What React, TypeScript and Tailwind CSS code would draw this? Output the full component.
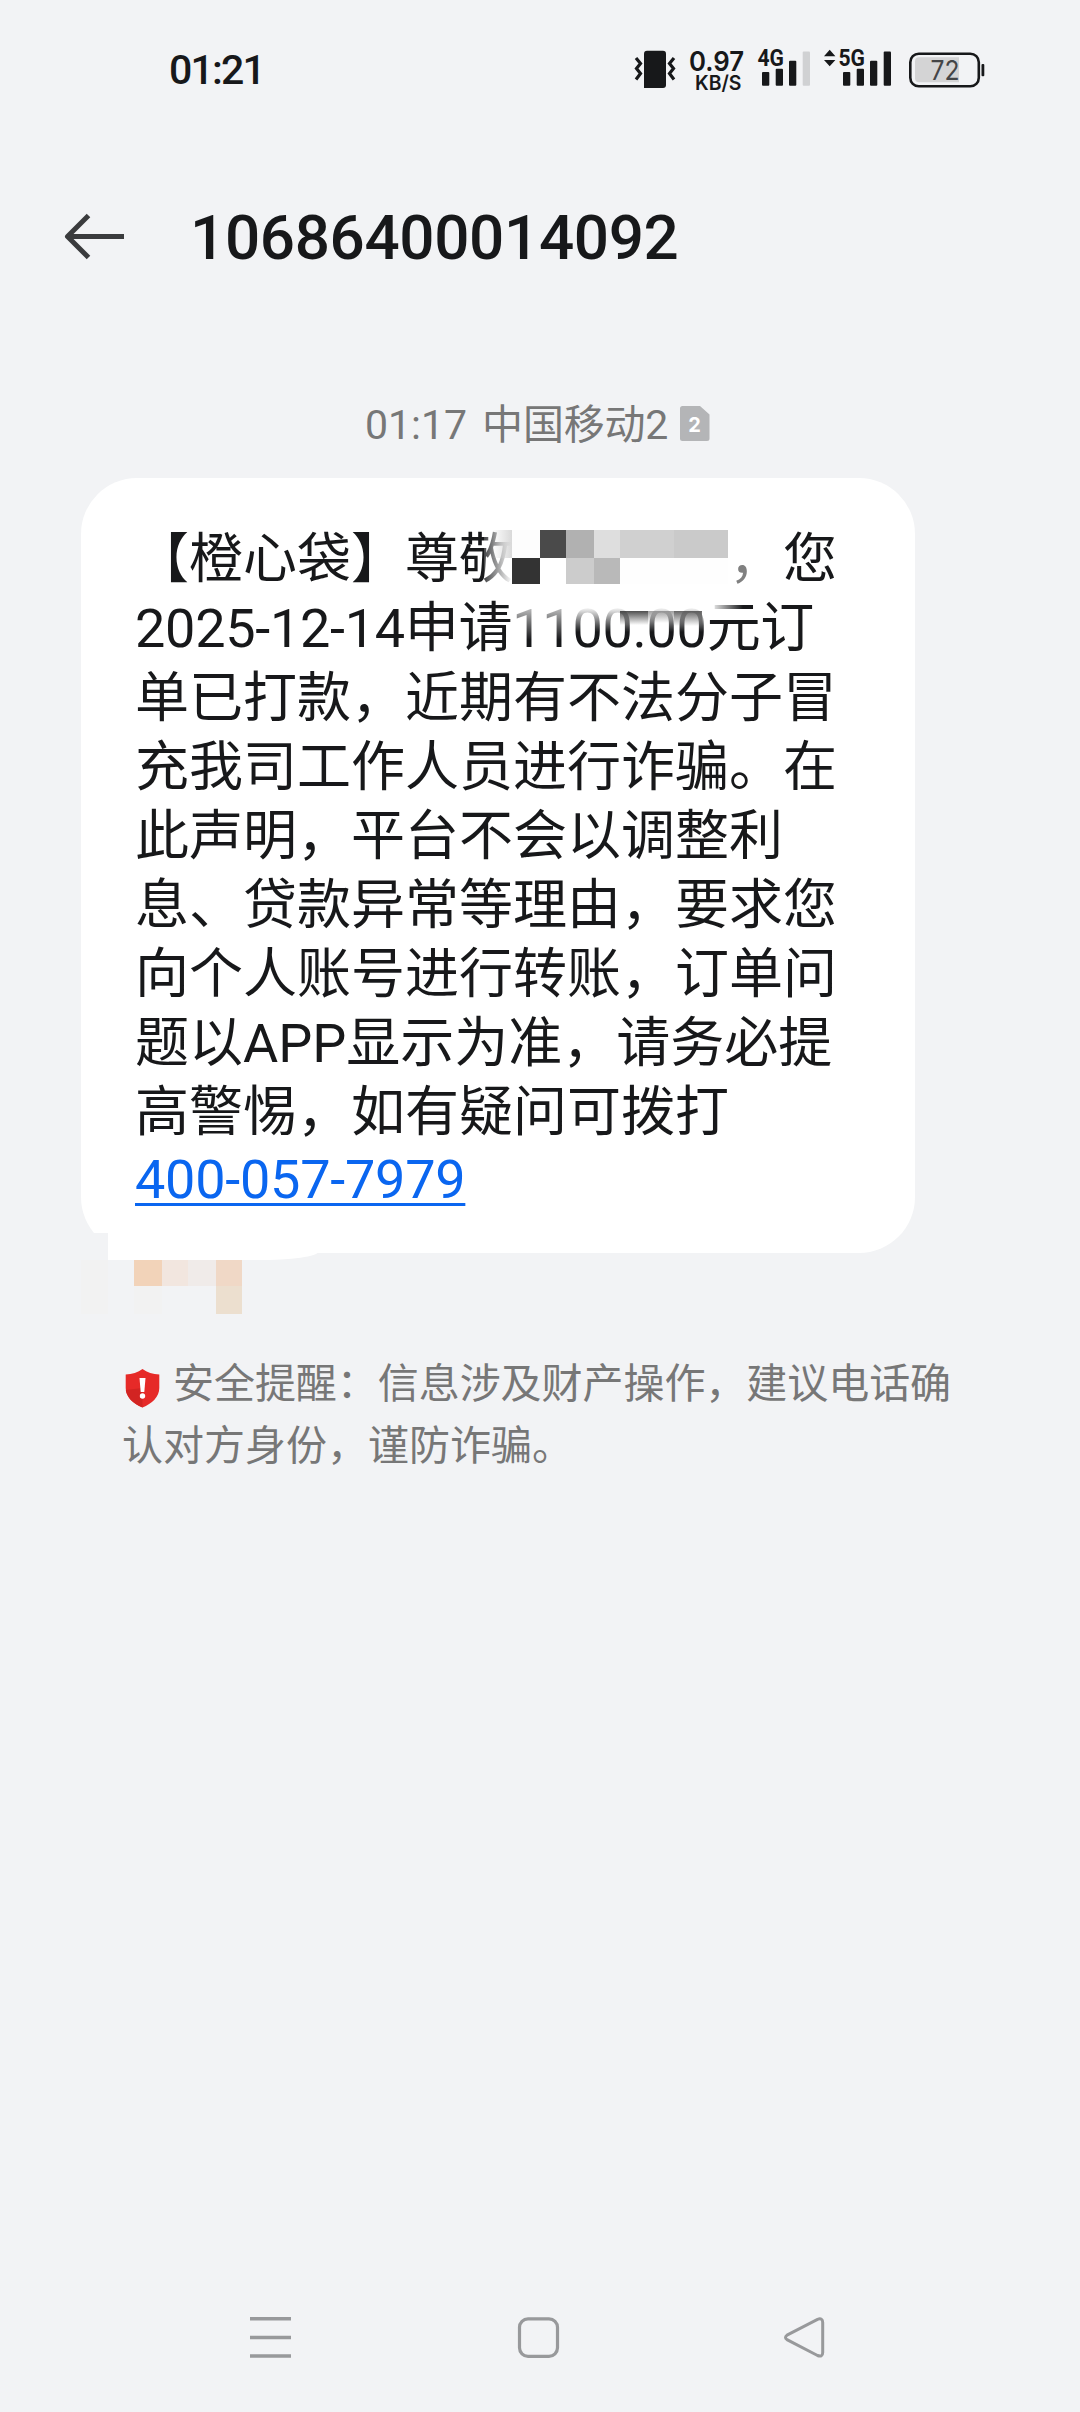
const INK = "#17181a";

const lines = [
  "单已打款，近期有不法分子冒",
  "充我司工作人员进行诈骗。在",
  "此声明，平台不会以调整利",
  "息、贷款异常等理由，要求您",
  "向个人账号进行转账，订单问",
  "题以APP显示为准，请务必提",
  "高警惕，如有疑问可拨打",
];

function StatusBar() {
  return (
    <header className="flex h-[139px] pl-[169px] text-[#17181a]">
      <div className="mt-[40px] h-[60px] w-[463px] text-[41px] leading-[60px] font-medium tracking-[-1.800px]">
        01:21
      </div>
      {/* vibrate */}
      <svg className="mt-[46px] h-[48px] w-[48px]" viewBox="632 46 48 48" fill="none">
        <path d="M647 50.7H663a3 3 0 0 1 3 3V85a3 3 0 0 1-3 3H644V53.7a3 3 0 0 1 3-3Z" fill={INK} />
        <path d="M636 58l4.500 5.500-4 5 4 5-4.500 6M674 58l-4.500 5.500 4 5-4 5 4.500 6" stroke={INK} strokeWidth="3.200" />
      </svg>
      {/* network speed */}
      <svg className="mt-[46px] h-[50px] w-[70px] overflow-visible" viewBox="680 46 70 50" fill={INK} fontFamily="Inter" fontWeight="600">
        <text x="689" y="71.300" fontSize="27" textLength="55" lengthAdjust="spacingAndGlyphs">0.97</text>
        <text x="695" y="90.300" fontSize="20" textLength="46.500" lengthAdjust="spacingAndGlyphs">KB/S</text>
      </svg>
      {/* 4G signal */}
      <svg className="mt-[40px] h-[54px] w-[70px] overflow-visible" viewBox="750 40 70 54" fill={INK}>
        <text x="757.500" y="66.200" fontFamily="Roboto" fontWeight="700" fontSize="23.500" textLength="26.500" lengthAdjust="spacingAndGlyphs">4G</text>
        <rect x="762" y="72" width="7.300" height="13.700" rx="1" />
        <rect x="775.700" y="68.700" width="7.300" height="17" rx="1" />
        <rect x="789" y="60.700" width="7.300" height="25" rx="1" />
        <rect x="802.700" y="51.500" width="7.300" height="34.200" rx="1" fill="#d0d1d3" />
      </svg>
      {/* 5G signal */}
      <svg className="mt-[40px] h-[54px] w-[80px] overflow-visible" viewBox="820 40 80 54" fill={INK}>
        <path d="M824 56.200l5.700-6.400 5.700 6.400ZM824 59.900l5.700 6.400 5.700-6.400Z" />
        <text x="838.500" y="66.200" fontFamily="Roboto" fontWeight="700" fontSize="23.500" textLength="26.500" lengthAdjust="spacingAndGlyphs">5G</text>
        <rect x="843" y="72" width="7.300" height="13.700" rx="1" />
        <rect x="856.700" y="68.700" width="7.300" height="17" rx="1" />
        <rect x="870" y="60.700" width="7.300" height="25" rx="1" />
        <rect x="883.700" y="51.500" width="7.300" height="34.200" rx="1" />
      </svg>
      {/* battery */}
      <svg className="mt-[46px] h-[48px] w-[90px]" viewBox="900 46 90 48" fill="none">
        <rect x="910.300" y="53.700" width="68.500" height="32.600" rx="8.500" stroke={INK} strokeWidth="2.600" />
        <path d="M919 57.300H959V82.300H919a4 4 0 0 1-4-4V61.300a4 4 0 0 1 4-4Z" fill="#d4d4d5" />
        <rect x="981.500" y="64" width="2.800" height="12.300" rx="1" fill={INK} />
        <text x="930.500" y="80" fontFamily="Inter" fontSize="26.500" fill="#444547" textLength="29" lengthAdjust="spacingAndGlyphs">72</text>
      </svg>
    </header>
  );
}

function TitleBar() {
  return (
    <div className="flex h-[251px] pt-[57px] pl-[64px]">
      <svg className="mt-[16px] h-[50px] w-[62px]" viewBox="64 212 62 50" fill="none" stroke="#3a3b3d" strokeWidth="5">
        <path d="M124 236.500H68M88.500 215.500L67.500 236.500 88.500 257.500" strokeLinejoin="round" />
      </svg>
      <h1 className="ml-[64px] h-[84px] text-[62px] leading-[84px] font-medium tracking-[-0.35px] text-[#17181a]">
        10686400014092
      </h1>
    </div>
  );
}

function Timestamp() {
  return (
    <div className="flex h-[88px] pl-[365px] text-[41px] leading-[71px] whitespace-nowrap text-[#777]">
      <span>01:17</span>
      <span className="ml-[15px] tracking-[-0.2px]">中国移动2</span>
      <svg className="mt-[16px] ml-[12px] h-[35px] w-[30px]" viewBox="0 0 30 35">
        <path d="M2.500 0H20l9.500 8.500V32.500a2.500 2.500 0 0 1-2.500 2.500H2.500A2.500 2.500 0 0 1 0 32.500V2.500A2.500 2.500 0 0 1 2.500 0Z" fill="#b4b5b7" />
        <text x="14.500" y="25.500" textAnchor="middle" fontFamily="Inter" fontWeight="700" fontSize="20" fill="#fff">2</text>
      </svg>
    </div>
  );
}

/* Pixelated strip that hides the recipient's name */
function NameMosaic() {
  return (
    <div className="absolute top-[52px] left-[403px] h-[54px] w-[244px]">
      <div className="absolute top-0 left-0 h-[58px] w-[28px] bg-linear-to-r from-white/20 to-white" />
      <div className="absolute top-0 left-[8px] h-[28px] w-[20px] bg-linear-to-r from-[#cccccc]/0 to-[#cfcfcf]/80" />
      <div className="absolute top-0 left-[28px] grid grid-cols-[28px_26px_28px_26px_54px_54px] grid-rows-[28px_26px]">
        <i className="bg-[#fdfdfd]" />
        <i className="bg-[#4a4a4a]" />
        <i className="bg-[#b1b1b1]" />
        <i className="bg-[#dedede]" />
        <i className="bg-[#d0d0d0]" />
        <i className="bg-[#cacaca]" />
        <i className="bg-[#333333]" />
        <i className="bg-white" />
        <i className="bg-[#cccccc]" />
        <i className="bg-[#b9b9b9]" />
        <i className="bg-[#fefefe]" />
        <i className="bg-[#fefefe]" />
      </div>
    </div>
  );
}

/* Smudge left over the amount by the redaction brush */
function AmountSmudge() {
  return (
    <>
      <div className="absolute top-[126px] left-[434px] h-[36px] w-[54px] bg-linear-to-b from-white/80 to-white/0" />
      <div className="absolute top-[126px] left-[488px] h-[28px] w-[140px] bg-linear-to-b from-white/90 from-20% to-white/0" />
      <div className="absolute top-[133px] left-[539px] h-[14px] w-[28px] bg-linear-to-b from-[#222]/80 to-[#aaa]/0" />
      <div className="absolute top-[133px] left-[567px] h-[12px] w-[26px] bg-linear-to-b from-[#777]/70 to-[#ccc]/0" />
      <div className="absolute top-[133px] left-[593px] h-[15px] w-[28px] bg-linear-to-b from-[#333]/75 to-[#999]/0" />
      <div className="absolute top-[126px] left-[632px] h-[8px] w-[30px] bg-linear-to-r from-white/90 to-white/0" />
    </>
  );
}

function Bubble() {
  return (
    <section className="relative ml-[81px] h-[775px] w-[834px] rounded-[56px] bg-white pt-[47px] pl-[54px] text-[54px] leading-[69px] whitespace-nowrap text-[#17181a]">
      <div className="flex">
        <span>【橙心袋】尊敬</span>
        <span className="ml-[216px] text-[#808080]">，</span>
        <span>您</span>
      </div>
      <div className="tracking-[-0.28px]">2025-12-14申请1100.00元订</div>
      <div className="pt-px">
        {lines.map((line) => (
          <div key={line}>{line}</div>
        ))}
      </div>
      <a className="-mt-[2px] block w-fit tracking-[-0.25px] text-[#0a66f0] underline decoration-[3px] underline-offset-[5px] [text-decoration-skip-ink:none]">
        400-057-7979
      </a>
      <NameMosaic />
      <AmountSmudge />
      <div className="absolute top-[755px] left-0 h-[27px] w-[27px] bg-[#f2f3f5]" />
      <div className="absolute top-[765px] left-[27px] h-[17px] w-[210px] rounded-br-[60px_8px] bg-white" />
    </section>
  );
}

/* Pixelated remains below the bubble */
function FooterMosaic() {
  return (
    <div className="mt-[7px] ml-[81px] grid h-[54px] grid-cols-[27px_26px_28px_26px_28px_26px] grid-rows-[26px_28px]">
      <i className="bg-[#f2f2f2]" />
      <i />
      <i className="bg-[#f2d3b9]" />
      <i className="bg-[#f2e6df]" />
      <i className="bg-[#f0ebe9]" />
      <i className="bg-[#f0d8c6]" />
      <i className="bg-[#f2f2f2]" />
      <i />
      <i className="bg-[#f2f2f2]" />
      <i />
      <i />
      <i className="bg-[#ecdfcf]" />
    </div>
  );
}

function SafetyTip() {
  return (
    <div className="mt-[39px] ml-[122px] text-[41px] leading-[62px] whitespace-nowrap text-[#777]">
      <div className="flex">
        <svg className="mt-[15px] mr-[13px] ml-[3px] h-[40px] w-[35px]" viewBox="0 0 35 40">
          <path d="M17.500 1C22 4.500 28 6 34.300 6.500V20C34.300 29 27 35.500 17.500 39.500 8 35.500 .700 29 .700 20V6.500C7 6 13 4.500 17.500 1Z" fill="#e62a28" />
          <path d="M17.500 20 .8 22C2 30 9 36 17.500 39.500Z" fill="#d22422" />
          <path d="M14.500 10h6l-1.200 14h-3.600Z" fill="#fff" />
          <circle cx="17.500" cy="28" r="2.700" fill="#fff" />
        </svg>
        <span className="tracking-[-0.05px]">安全提醒：信息涉及财产操作，建议电话确</span>
      </div>
      <div>认对方身份，谨防诈骗。</div>
    </div>
  );
}

function NavBar() {
  return (
    <nav className="mt-auto flex h-[98px] pl-[249px]">
      <svg className="h-[48px] w-[44px]" viewBox="249 2314 44 48" stroke="#98999b" strokeWidth="3.500">
        <path d="M250 2318.800H291M250 2337.500H291M250 2356H291" />
      </svg>
      <svg className="ml-[222px] h-[48px] w-[47px]" viewBox="515 2314 47 48" fill="none" stroke="#98999b" strokeWidth="3.200">
        <rect x="519.500" y="2318.800" width="38" height="37.500" rx="8.500" />
      </svg>
      <svg className="ml-[219px] h-[48px] w-[47px]" viewBox="781 2314 47 48" fill="none" stroke="#98999b" strokeWidth="3">
        <path d="M787 2335.200L817.500 2319.300Q822.700 2317.500 822.700 2322.500V2352.500Q822.700 2357.500 817.500 2355.500L787 2339.600Q784 2337.400 787 2335.200Z" />
      </svg>
    </nav>
  );
}

export default function App() {
  return (
    <div className="flex h-[2412px] w-[1080px] flex-col bg-[#f2f3f5] font-['Roboto','Noto_Sans_CJK_SC',sans-serif]">
      <StatusBar />
      <TitleBar />
      <Timestamp />
      <Bubble />
      <FooterMosaic />
      <SafetyTip />
      <NavBar />
    </div>
  );
}
